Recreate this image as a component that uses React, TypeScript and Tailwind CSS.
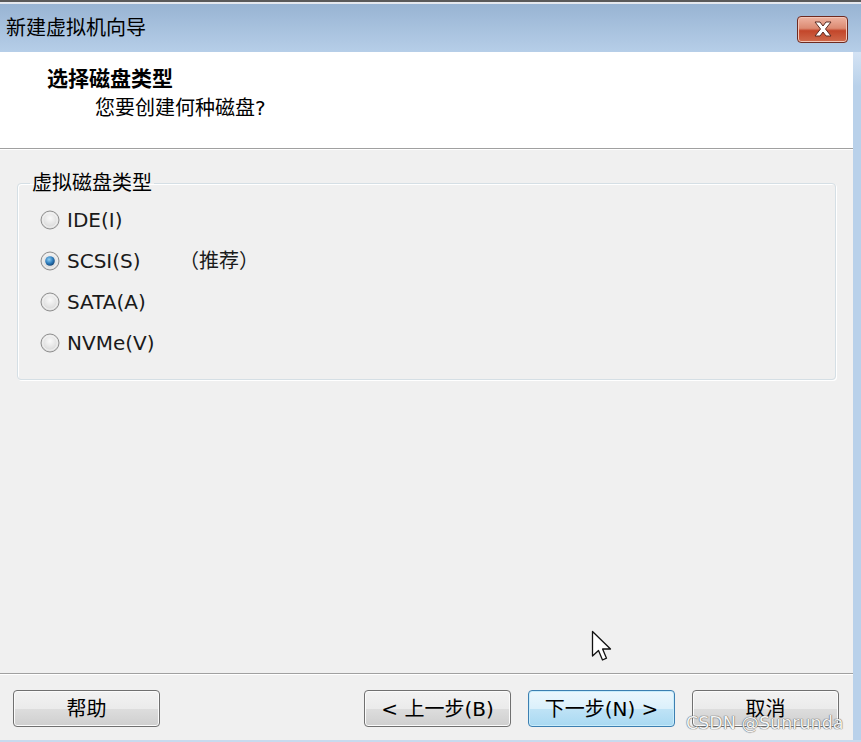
import React from "react";

const FONT = { fontFamily: '"DejaVu Sans","Noto Sans CJK SC",sans-serif' };

function Radio({ checked }: { checked?: boolean }) {
  return (
    <svg width="20" height="20" viewBox="0 0 20 20" className="shrink-0">
      <defs>
        <radialGradient id="rg" cx="50%" cy="40%" r="60%">
          <stop offset="0%" stopColor="#fafafa" />
          <stop offset="100%" stopColor="#d4d4d4" />
        </radialGradient>
        <radialGradient id="rb" cx="40%" cy="35%" r="70%">
          <stop offset="0%" stopColor="#8fd0f5" />
          <stop offset="60%" stopColor="#2a78b8" />
          <stop offset="100%" stopColor="#14406e" />
        </radialGradient>
      </defs>
      <circle cx="10" cy="10" r="9" fill="url(#rg)" stroke="#8f8f8f" strokeWidth="1" />
      <circle cx="10" cy="10" r="7.3" fill="none" stroke="#ffffff" strokeOpacity="0.6" strokeWidth="1" />
      {checked && <circle cx="10" cy="10" r="4.8" fill="url(#rb)" />}
    </svg>
  );
}

function Btn({ children, primary }: { children: React.ReactNode; primary?: boolean }) {
  return (
    <div
      className={
        primary
          ? "w-[147px] h-[37px] rounded-[4px] border border-[#3c7fb1] bg-[linear-gradient(#ecf7fd_0%,#dbf0fb_50%,#bfe3f6_51%,#a9d9f2_100%)] shadow-[inset_0_0_0_1px_#c8ecfb] flex items-center justify-center text-[20px] text-black"
          : "w-[147px] h-[37px] rounded-[4px] border border-[#707070] bg-[linear-gradient(#f2f2f2_0%,#ebebeb_50%,#dddddd_51%,#cfcfcf_100%)] shadow-[inset_0_0_0_1px_#fbfbfb] flex items-center justify-center text-[20px] text-black"
      }
    >
      {children}
    </div>
  );
}

export default function App() {
  const rows: { label: string; checked?: boolean; note?: string }[] = [
    { label: "IDE(I)" },
    { label: "SCSI(S)", checked: true, note: "（推荐）" },
    { label: "SATA(A)" },
    { label: "NVMe(V)" },
  ];
  return (
    <div className="relative w-[861px] h-[742px] overflow-hidden flex flex-col bg-[#b9d1ea]" style={FONT}>
      <div className="h-[2px] bg-[#5a5a5a]" />
      <div className="h-[2px] bg-[#e4e8ee]" />
      {/* title bar */}
      <div className="h-[48px] flex items-center justify-between bg-[linear-gradient(#98b4d3,#b6cee8)]">
        <span className="pl-[6px] text-[20px] text-black leading-none">新建虚拟机向导</span>
        <div className="mr-[13px] mt-[2px] w-[51px] h-[27px] rounded-[4px] border border-[#6e2a20] bg-[linear-gradient(#eeb4a2_0%,#dc8a72_45%,#c3462a_55%,#d06a4c_100%)] shadow-[inset_0_0_0_1px_#f3c6b8] flex items-center justify-center">
          <svg width="20" height="16" viewBox="0 0 20 16">
            <path
              d="M2 1 L7 1 L10 5 L13 1 L18 1 L12.5 8 L18 15 L13 15 L10 11 L7 15 L2 15 L7.5 8 Z"
              fill="#ffffff"
              stroke="#5a2a22"
              strokeWidth="1"
              strokeLinejoin="round"
            />
          </svg>
        </div>
      </div>
      {/* client + right frame */}
      <div className="flex-1 flex">
        <div className="flex-1 flex flex-col">
          {/* header */}
          <div className="h-[96px] bg-white pt-[15px]">
            <div className="pl-[47px] text-[21px] font-bold leading-[24px] text-black">选择磁盘类型</div>
            <div className="pl-[95px] mt-[5px] text-[20px] leading-[24px] text-black">您要创建何种磁盘?</div>
          </div>
          <div className="h-[1px] bg-[#a0a0a0]" />
          <div className="h-[1px] bg-white" />
          {/* body */}
          <div className="flex-1 bg-[#f0f0f0] flex flex-col">
            <fieldset className="mt-[21px] mx-[17px] border border-[#d5dfe5] rounded-[4px] shadow-[inset_1px_1px_0_#ffffff,1px_1px_0_#ffffff] pt-[4px] pb-[16px]">
              <legend className="ml-[12px] px-[2px] text-[20px] leading-[24px] text-black">虚拟磁盘类型</legend>
              {rows.map((r) => (
                <div key={r.label} className="h-[41px] pl-[22px] flex items-center">
                  <Radio checked={r.checked} />
                  <span className="ml-[7px] w-[112px] text-[20px] text-[#1a1a1a]">{r.label}</span>
                  {r.note && <span className="text-[20px] text-[#1a1a1a]">{r.note}</span>}
                </div>
              ))}
            </fieldset>
            <div className="flex-1" />
            <div className="h-[1px] bg-[#a0a0a0]" />
            <div className="h-[1px] bg-white" />
            <div className="flex items-center pt-[15px] pb-[13px] pl-[13px] pr-[14px]">
              <Btn>帮助</Btn>
              <div className="flex-1" />
              <div className="flex gap-[17px]">
                <Btn>&lt; 上一步(B)</Btn>
                <Btn primary>下一步(N) &gt;</Btn>
                <Btn>取消</Btn>
              </div>
            </div>
          </div>
        </div>
        <div className="w-[8px] bg-[linear-gradient(#d4e3f4,#b9d1ea_5%,#b9d1ea)]" />
      </div>
      <div className="h-[2px] bg-[#c8daee]" />

      {/* mouse cursor */}
      <svg className="absolute left-[591px] top-[630px]" width="22" height="34" viewBox="0 0 22 34">
        <path
          d="M1.5 1.5 L1.5 26 L7.5 20.5 L11.5 30 L15.5 28.2 L11.6 19 L19.5 19 Z"
          fill="#ffffff"
          stroke="#111111"
          strokeWidth="1.3"
          strokeLinejoin="round"
        />
      </svg>

      {/* watermark */}
      <div
        className="absolute left-[686px] top-[711px] text-[17.5px] leading-[24px] text-[#f4f4f4] [text-shadow:0_0_1px_#555,0_0_1px_#555]"
        style={{ fontFamily: '"DejaVu Sans",sans-serif' }}
      >
        CSDN @Sunrunda
      </div>
    </div>
  );
}
